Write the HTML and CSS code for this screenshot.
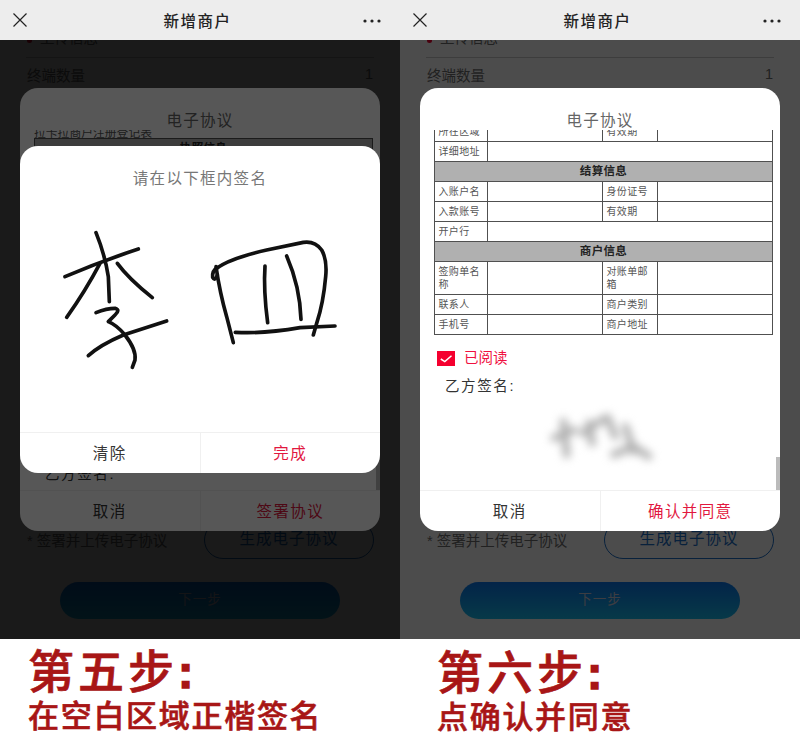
FILE: index.html
```html
<!DOCTYPE html>
<html lang="zh-CN">
<head>
<meta charset="utf-8">
<title>第五步 第六步</title>
<link rel="stylesheet" href="styles.css">
</head>
<body>
<main class="sheet">
  <section class="step">
    <div class="screen">
      <header class="nav">
        <svg class="nav-close" viewBox="0 0 14 14"><path d="M0.5 0.5 13.5 13.5M13.5 0.5 0.5 13.5"/></svg>
        <h1 class="nav-title">新增商户</h1>
        <svg class="nav-more" viewBox="0 0 18 4"><circle cx="2" cy="2" r="1.6"/><circle cx="9" cy="2" r="1.6"/><circle cx="16" cy="2" r="1.6"/></svg>
      </header>
      <div class="page">
        <div class="row row-first"><span class="red-dot"></span><span>上传信息</span></div>
        <div class="row row-count"><span>终端数量</span><span>1</span></div>
        <div class="row-sign"><span class="sign-note">* 签署并上传电子协议</span><span class="gen-btn">生成电子协议</span></div>
        <div class="next-btn">下一步</div>
      </div>
      <div class="overlay"></div>
      <div class="modal">
        <h2 class="modal-title">电子协议</h2>
        <div class="modal-body">
          <p class="doc-name">拉卡拉商户注册登记表</p>
          <table class="doc">
            <colgroup><col class="c1"><col class="c2"><col class="c3"><col class="c4"></colgroup>
            <tr><th colspan="4">执照信息</th></tr>
          </table>
          <p class="party party-bottom">乙方签名:</p>
          <span class="scroll scroll-left"></span>
        </div>
        <div class="modal-foot"><span class="foot-btn">取消</span><span class="foot-btn foot-red">签署协议</span></div>
      </div>
      <div class="overlay overlay-top"></div>
      <div class="modal-sign">
        <h2 class="sign-title">请在以下框内签名</h2>
        <svg class="sign-pad" viewBox="60 -12 1080 708">
          <path d="M195 230 Q300 185 415 147"/>
          <path d="M288 98 Q315 165 325 230 L328 305"/>
          <path d="M300 190 Q255 275 200 352"/>
          <path d="M352 190 Q385 235 457 293"/>
          <path d="M288 338 Q320 325 345 325 Q362 330 345 345 L325 365 Q350 375 375 405 Q410 450 405 480 L397 502"/>
          <path d="M265 467 Q300 435 370 405 L500 363"/>
          <path d="M648 200 Q660 280 680 350 L700 428"/>
          <path d="M652 203 Q636 212 638 232 Q645 245 652 225"/>
          <path d="M650 205 Q690 175 800 150 L910 127 Q945 122 965 150 Q982 180 977 230 Q970 310 950 370 L940 405"/>
          <path d="M795 198 Q790 270 803 368"/>
          <path d="M860 168 Q900 260 903 358"/>
          <path d="M706 397 Q790 402 900 383 L1005 378"/>
        </svg>
        <div class="modal-foot modal-foot-sign"><span class="foot-btn">清除</span><span class="foot-btn foot-red">完成</span></div>
      </div>
    </div>
    <div class="caption">
      <p class="cap-big">第五步<span class="cap-colon">:</span></p>
      <p class="cap-small">在空白区域正楷签名</p>
    </div>
  </section>

  <section class="step">
    <div class="screen">
      <header class="nav">
        <svg class="nav-close" viewBox="0 0 14 14"><path d="M0.5 0.5 13.5 13.5M13.5 0.5 0.5 13.5"/></svg>
        <h1 class="nav-title">新增商户</h1>
        <svg class="nav-more" viewBox="0 0 18 4"><circle cx="2" cy="2" r="1.6"/><circle cx="9" cy="2" r="1.6"/><circle cx="16" cy="2" r="1.6"/></svg>
      </header>
      <div class="page">
        <div class="row row-first"><span class="red-dot"></span><span>上传信息</span></div>
        <div class="row row-count"><span>终端数量</span><span>1</span></div>
        <div class="row-sign"><span class="sign-note">* 签署并上传电子协议</span><span class="gen-btn">生成电子协议</span></div>
        <div class="next-btn">下一步</div>
      </div>
      <div class="overlay"></div>
      <div class="modal">
        <h2 class="modal-title">电子协议</h2>
        <div class="modal-body">
          <table class="doc doc-scrolled">
            <colgroup><col class="c1"><col class="c2"><col class="c3"><col class="c4"></colgroup>
            <tr><td>所在区域</td><td></td><td>有效期</td><td></td></tr>
            <tr><td>详细地址</td><td colspan="3"></td></tr>
            <tr><th colspan="4">结算信息</th></tr>
            <tr><td>入账户名</td><td></td><td>身份证号</td><td></td></tr>
            <tr><td>入款账号</td><td></td><td>有效期</td><td></td></tr>
            <tr><td>开户行</td><td colspan="3"></td></tr>
            <tr><th colspan="4">商户信息</th></tr>
            <tr><td>签购单名称</td><td></td><td>对账单邮箱</td><td></td></tr>
            <tr><td>联系人</td><td></td><td>商户类别</td><td></td></tr>
            <tr><td>手机号</td><td></td><td>商户地址</td><td></td></tr>
          </table>
          <div class="read">
            <svg class="check" viewBox="0 0 18 15"><rect width="18" height="15"/><path d="M3.8 8 7.8 10.6 14.5 4.8"/></svg>
            <span>已阅读</span>
          </div>
          <p class="party">乙方签名:</p>
          <svg class="blur-sign" viewBox="440 540 320 160">
            <path d="M460 625 520 600"/>
            <path d="M488 575 498 675"/>
            <path d="M545 610 605 570"/>
            <path d="M565 580 575 640"/>
            <path d="M620 562 645 620"/>
            <path d="M675 590 700 665"/>
            <path d="M640 675 700 650"/>
            <path d="M700 650 745 680"/>
          </svg>
          <span class="scroll scroll-right"></span>
        </div>
        <div class="modal-foot"><span class="foot-btn">取消</span><span class="foot-btn foot-red">确认并同意</span></div>
      </div>
    </div>
    <div class="caption">
      <p class="cap-big">第六步<span class="cap-colon">:</span></p>
      <p class="cap-small">点确认并同意</p>
    </div>
  </section>
</main>
</body>
</html>
```

FILE: styles.css
```css
* { box-sizing: border-box; }
html, body { margin: 0; padding: 0; background: #fff; }
body { font-family: "Liberation Sans", "Noto Sans CJK SC", sans-serif; }
h1, h2, p { margin: 0; font-weight: 400; }

.sheet { display: flex; width: 800px; height: 750px; overflow: hidden; }
.step { width: 400px; display: flex; flex-direction: column; }
.screen { position: relative; height: 639px; overflow: hidden; background: #fff; }

.nav {
  position: relative; z-index: 5; height: 40px; background: #ededed;
  display: flex; align-items: center; justify-content: space-between;
  padding: 0 19px 0 13px;
}
.nav-close { width: 14px; height: 14px; fill: none; stroke: #222; stroke-width: 1.2; }
.nav-title { margin-left: 5px; font-size: 15.5px; font-weight: 500; letter-spacing: 1.5px; color: #222; }
.nav-more { width: 18px; height: 4px; margin-top: 1px; fill: #222; }

.page { display: flex; flex-direction: column; padding: 0 26px; color: #707070; font-size: 14.5px; }
.row { display: flex; justify-content: space-between; align-items: center; }
.row-first { justify-content: flex-start; gap: 8px; margin-top: -12px; height: 30px; border-bottom: 1px solid #ccc; padding: 0 1px 12px; }
.red-dot { width: 5px; height: 5px; margin-top: 8px; background: #f5002f; border-radius: 50%; }
.row-count { height: 36px; padding: 0 1px 4px; }
.row-sign { display: flex; justify-content: space-between; align-items: center; margin-top: 427px; padding: 0 0 0 1px; height: 38px; }
.sign-note { padding-bottom: 2px; }
.gen-btn {
  width: 170px; height: 38px; padding-bottom: 6px; border: 1px solid #1c6fc9; border-radius: 19px; color: #1c6fc9;
  display: flex; align-items: center; justify-content: center; font-size: 15.5px; letter-spacing: 1px;
}
.next-btn {
  align-self: center; width: 280px; height: 37px; margin-top: 23px; padding-bottom: 5px; border-radius: 19px;
  background: linear-gradient(180deg, #0a78f0, #18bff0); color: #ccd;
  display: flex; align-items: center; justify-content: center; font-size: 13.5px; letter-spacing: 1px;
}

.overlay { position: absolute; inset: 0; background: rgba(0, 0, 0, .7); }
.overlay-top { background: rgba(0, 0, 0, .66); }

.modal {
  position: absolute; left: 20px; right: 20px; top: 88px; height: 443px;
  background: #fff; border-radius: 18px; overflow: hidden;
  display: flex; flex-direction: column;
}
.modal-title { height: 42px; flex: none; padding-top: 22px; line-height: 22px; text-align: center; font-size: 15.5px; letter-spacing: 1.2px; color: #666; }
.modal-body { position: relative; flex: 1; min-height: 0; overflow: hidden; padding: 0 0 0 14px; display: flex; flex-direction: column; }
.doc-name { height: 8px; line-height: 6px; font-size: 11.8px; color: #555; }

.doc { width: 338px; flex: none; border-collapse: collapse; table-layout: fixed; font-size: 10px; letter-spacing: .35px; color: #555; }
.doc-scrolled { margin-top: -9px; }
.c1 { width: 53px; } .c2 { width: 115px; } .c3 { width: 55px; } .c4 { width: 115px; }
.doc td, .doc th { border: 1px solid #505050; height: 20px; line-height: 13.5px; font-weight: 400; }
.doc th { padding: 0 3px; background: #b0b0b0; text-align: center; font-size: 11.5px; font-weight: 700; color: #222; }
.doc td { padding: 2.5px 3.5px; }

.read { display: flex; align-items: center; gap: 9px; margin: 15px 0 0 3px; font-size: 14.5px; color: #f0103f; line-height: 16px; }
.check { width: 18px; height: 15px; }
.check rect { fill: #f5002f; }
.check path { fill: none; stroke: #fff; stroke-width: 1.5; }
.party { margin: 12px 0 0 11px; font-size: 14.5px; letter-spacing: 1.6px; line-height: 16px; color: #333; }
.party-bottom { margin-top: auto; margin-bottom: 8px; }
.blur-sign { width: 107px; height: 53px; margin: 16px 0 0 113px; flex: none; filter: blur(4.5px); fill: none; stroke: #b0b0b0; stroke-width: 22; stroke-linecap: round; stroke-linejoin: round; }

.scroll { position: absolute; right: 0; bottom: 0; width: 4px; background: #bbb; }
.scroll-right { height: 33px; }
.scroll-left { height: 33px; }

.modal-foot { flex: none; height: 41px; display: flex; border-top: 1px solid #f0f0f0; }
.foot-btn {
  flex: 1; display: flex; align-items: center; justify-content: center; padding-bottom: 3px;
  font-size: 15.5px; letter-spacing: 1.4px; color: #333;
}
.foot-btn + .foot-btn { border-left: 1px solid #f0f0f0; }
.foot-red { color: #e2183f; }
.modal-foot-sign .foot-btn { padding-bottom: 2px; }

.modal-sign {
  position: absolute; left: 20px; right: 20px; top: 146px; height: 327px;
  background: #fff; border-radius: 18px; overflow: hidden;
  display: flex; flex-direction: column;
}
.sign-title { height: 50px; flex: none; padding-top: 22px; line-height: 22px; text-align: center; font-size: 15.5px; letter-spacing: 1.3px; color: #777; }
.sign-pad { display: block; width: 360px; height: 236px; flex: none; fill: none; stroke: #111; stroke-width: 11; stroke-linecap: round; stroke-linejoin: round; }

.caption { flex: 1; padding: 6px 0 0 28px; color: #a81616; }
.step:last-child .caption { padding: 7px 0 0 37px; }
.cap-big { font-weight: 500; font-size: 46px; letter-spacing: 4px; line-height: 54px; -webkit-text-stroke: .7px #a81616; }
.cap-colon { font-weight: 700; -webkit-text-stroke: 1.6px #a81616; }
.cap-small { font-weight: 500; font-size: 31px; letter-spacing: 1.7px; line-height: 38px; margin-top: -1px; -webkit-text-stroke: .6px #a81616; }
```
